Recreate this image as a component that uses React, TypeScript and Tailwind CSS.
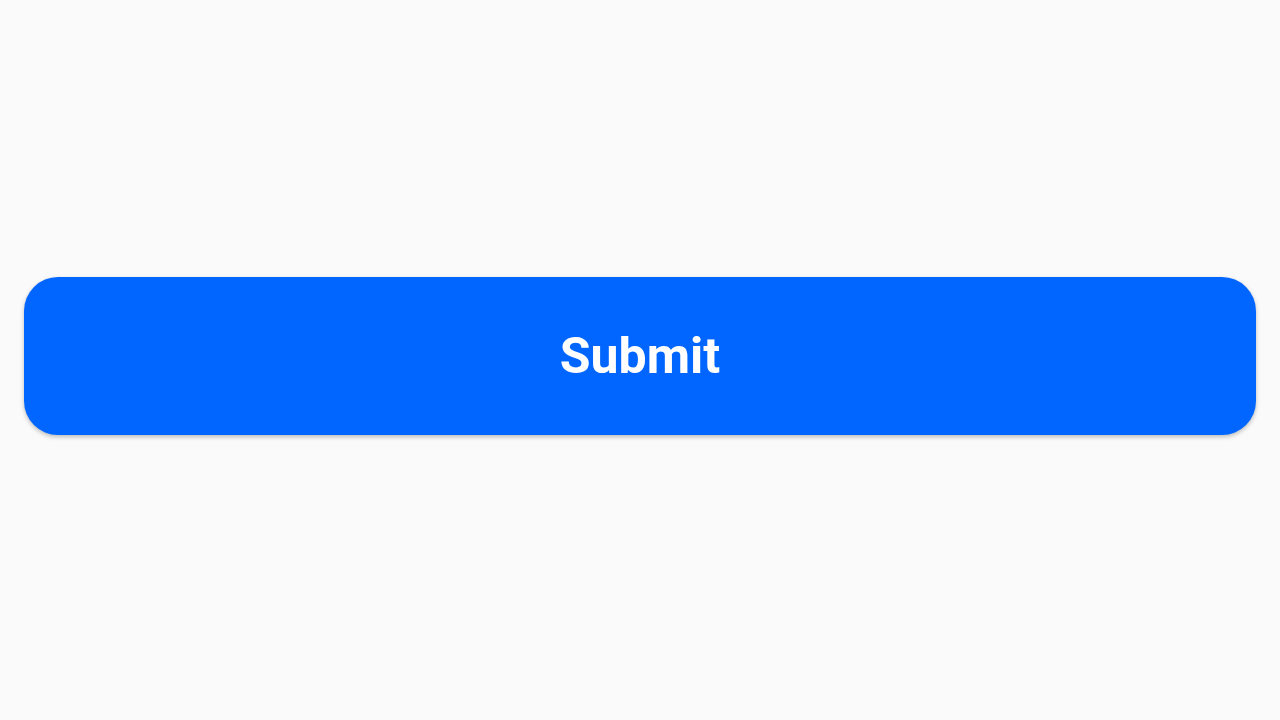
export default function App() {
  return (
    <div className="flex min-h-screen items-center bg-[#fafafa] px-6 pb-2 font-['Roboto',sans-serif]">
      <button
        type="button"
        className="flex h-[158px] w-full items-center justify-center rounded-[34px] bg-[#0066ff] text-[50px] font-bold text-white shadow-[0_2px_4px_rgba(0,0,0,0.25)]"
      >
        Submit
      </button>
    </div>
  );
}
